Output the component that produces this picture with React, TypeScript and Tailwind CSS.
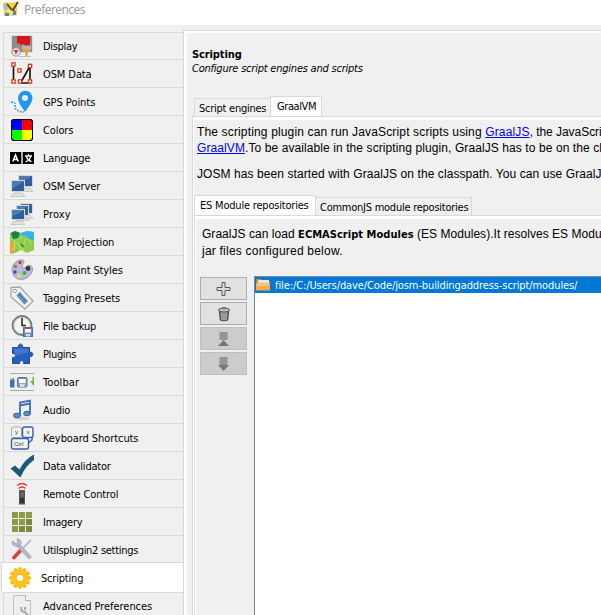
import React from 'react';

function Icon({ name }: { name: string }) {
  const p = { width: 24, height: 24, viewBox: '0 0 24 24', fill: 'none' } as const;
  switch (name) {
    case 'display':
      return (
        <svg {...p}>
          <rect x="1.5" y="1.5" width="21" height="17" fill="#8c8c8c" stroke="#ddd" />
          <path d="M7 2h13v10l-1.500 1-1-2-1.500 3-2-4-3 1-2-2-2 1z" fill="#d8141c" />
          <path d="M12 11.500h9v3.500h-9z" fill="#b9b4ae" />
          <path d="M12.500 15h8v2.500h-2.500l-.5 5h-2l-.5-5h-2.500z" fill="#e2a14a" />
          <circle cx="6" cy="18" r="4.200" fill="#e5e5e5" stroke="#999" />
          <path d="M3.500 16h5L6 20.500z" fill="#d8343c" />
          <path d="M9 22.500h12" stroke="#bbb" />
        </svg>
      );
    case 'osm':
      return (
        <svg {...p}>
          <path d="M3.500 3v18M10.500 21L20 4v17h-9.500" stroke="#111" strokeWidth="1.600" />
          {[[3.5, 2.5], [20, 4], [9.5, 8.5], [3.5, 19.5], [10, 19.5], [20, 19.5]].map(([x, y]) => (
            <g key={x + '-' + y}>
              <rect x={x - 2.300} y={y - 2.300} width="4.600" height="4.600" fill="#e23c1c" />
              <rect x={x - 1} y={y - 1} width="2" height="2" fill="#fff" />
            </g>
          ))}
        </svg>
      );
    case 'gps':
      return (
        <svg {...p}>
          <path d="M15 22C11 16 8 12 8 8a7 7 0 0 1 14.500 0c0 4-4 9-7.500 14z" fill="#2196f3" />
          <circle cx="15" cy="8" r="3" fill="#eee" />
          <path d="M1 12c3 0 5 1 4 4s4 6 9 6" stroke="#2d9be5" strokeWidth="1.600" strokeDasharray="1.800 1.200" />
        </svg>
      );
    case 'colors':
      return (
        <svg {...p}>
          <rect x="1" y="1" width="22" height="22" rx="3" fill="#000" />
          <path d="M2 2h10v10H2z" fill="#00f" />
          <path d="M12 2h10v10H12z" fill="#f00" />
          <path d="M2 12h10v10H2z" fill="#0f0" />
          <path d="M12 12h10v10H12z" fill="#ff0" />
          <rect x="1.500" y="1.500" width="21" height="21" rx="3" stroke="#000" />
        </svg>
      );
    case 'language':
      return (
        <svg {...p}>
          <path d="M0 6h11v12H0zM13 6h11v12H13z" fill="#000" />
          <path d="M11 6h2v12h-2z" fill="#aaa" />
          <path d="M2.800 15.500L5.500 9l2.700 6.500M3.800 13.500h3.500" stroke="#fff" strokeWidth="1.500" />
          <path d="M15 10h7M18.500 8v2M20.500 10.500c-.5 3-2 4.500-5 5.200M16.500 11c.8 2.300 2.500 4 5 4.700" stroke="#fff" strokeWidth="1.300" />
        </svg>
      );
    case 'server':
    case 'proxy':
      return (
        <svg {...p}>
          {(name === 'server' ? [[8, 1, 15, 11], [1, 6, 14, 11]] : [[10, 1, 13, 10], [6, 3, 13, 10], [1, 7, 14, 10]]).map(([x, y, w, h]) => (
            <g key={x}>
              <path d={`M${x + 3} ${y + h + 2}h${w - 6}l3 3.500H${x}z`} fill="#e2e2dd" stroke="#b5b5b0" strokeWidth=".6" />
              <rect x={x} y={y} width={w} height={h + 1} fill="#d6d6d2" />
              <rect x={x + 1} y={y + 1} width={w - 2} height={h - 1} fill="#2f5f9f" />
              <path d={`M${x + 1} ${y + 1}h${w - 2}L${x + 1} ${y + h - 2}z`} fill="#4d7cb5" />
            </g>
          ))}
        </svg>
      );
    case 'map':
      return (
        <svg {...p}>
          <path d="M0 3l5-2 6 2 6-2 7 1v18l-7 3-6-3-6 3-5 1z" fill="#8ccb50" />
          <path d="M11 3l6-2 7 1v9l-6-3-4 1z" fill="#31b5ea" />
          <path d="M1 3l4-2 5 2-2 5-5 1z" fill="#14814d" />
          <path d="M0 14l3-3 2 5-2 7H0z" fill="#f7a032" />
          <path d="M1 9l7 4 3 7M8 10l7-4 7 8M13 21l2-13M5 12l-1 9" stroke="#c7e65b" strokeWidth="1" />
          <path d="M11 14l3 3" stroke="#3d7a27" strokeWidth="1.500" />
        </svg>
      );
    case 'paint':
      return (
        <svg {...p}>
          <path d="M13 2C5 1 0 9 3 16c2 6 10 7 15 3 3-2 4.500-5 4.500-8 0-4-4.500-5-6.500-2-3 2-5 0-3-3 1-2 2-3 0-4z" fill="#b9bbdc" stroke="#8789a8" strokeWidth=".8" />
          <circle cx="10" cy="4.500" r="1.600" fill="#d62b20" />
          <circle cx="5.500" cy="8.500" r="1.700" fill="#d66b10" />
          <circle cx="5" cy="14" r="1.700" fill="#2450c8" />
          <circle cx="9" cy="18" r="1.800" fill="#f0e93c" />
          <circle cx="14.500" cy="15" r="1.900" fill="#51ad23" />
          <circle cx="18" cy="10.500" r="2.400" fill="#333" />
        </svg>
      );
    case 'tag':
      return (
        <svg {...p}>
          <path d="M1 1.500l9-.5 13 14-8 8L1 11z" fill="#f0f0ee" stroke="#a8aaa5" strokeWidth="1.300" />
          <circle cx="4.800" cy="5" r="1.700" fill="#fff" stroke="#999" />
          <path d="M10 6l8 9-3.500 3.500-8-9z" fill="#4c7cb3" />
          <path d="M8.500 9.500l7 7.500M11 8l6.500 7" stroke="#a9c4e0" strokeWidth=".8" />
        </svg>
      );
    case 'backup':
      return (
        <svg {...p}>
          <circle cx="12" cy="11.500" r="9.500" fill="#f5f5f2" stroke="#777" strokeWidth="1.800" />
          <circle cx="12" cy="11.500" r="8" stroke="#c8c8c4" />
          <path d="M12 4v7.500h4" stroke="#222" strokeWidth="1.500" />
          <rect x="13.500" y="13.500" width="9" height="9" fill="#6d8fc4" stroke="#4a6fab" />
          <path d="M15 14h6v4.500h-6z" fill="#fff" />
          <path d="M14.500 14.500h7" stroke="#e33" />
          <path d="M16 20h4v2.500h-4z" fill="#ddd" />
        </svg>
      );
    case 'plugin':
      return (
        <svg {...p}>
          <path d="M2.500 5.500h6C7 1 14 1 12.500 5.500h7v5c4.500-1.500 4.500 5 0 4v7h-6c1-4-4.500-4-4 0h-7v-6c4 .5 4-4.500 0-4z" fill="#2560bf" stroke="#1b4b9b" />
          <path d="M3.500 6.500h15v4l-13 3z" fill="#4e87d4" opacity=".65" />
        </svg>
      );
    case 'toolbar':
      return (
        <svg {...p}>
          <path d="M0 3.500h24M0 20.500h24" stroke="#aaa" />
          <path d="M0 8h3.500l1 1.500v8H0z" fill="#4475aa" />
          <path d="M0 8h3v2H0z" fill="#a6bccc" />
          <rect x="7.500" y="7.500" width="9.500" height="9.500" rx="1" fill="#8fa6ca" stroke="#5472a3" />
          <path d="M9 8h6.500v5H9z" fill="#fff" />
          <path d="M9 8.500h6.500" stroke="#d66" />
          <path d="M10 14h4.500v3H10z" fill="#ddd" />
          <path d="M24 7h-1.500v4H20l4 5.500z" fill="#73b72a" />
        </svg>
      );
    case 'audio':
      return (
        <svg {...p}>
          <ellipse cx="12" cy="20.500" rx="8" ry="1.800" fill="#d5d5d5" />
          <path d="M10 18V4.500l10-2V16M10 7.500l10-2" stroke="#3f6fb5" strokeWidth="1.800" />
          <ellipse cx="7" cy="17.500" rx="3.600" ry="2.300" fill="#5a8fd6" stroke="#35609f" />
          <ellipse cx="17" cy="15.500" rx="3.300" ry="2.300" fill="#5a8fd6" stroke="#35609f" />
        </svg>
      );
    case 'keyboard':
      return (
        <svg {...p}>
          <path d="M22 11v3l-5 4" stroke="#3465a4" strokeWidth="1.500" />
          <rect x="1.500" y="1" width="10" height="10.500" rx="2" fill="#f2f2f0" stroke="#aaa" />
          <rect x="12.500" y="1" width="10.500" height="10.500" rx="2" fill="#f2f2f0" stroke="#3465a4" strokeWidth="1.400" />
          <rect x="1.500" y="12.500" width="17" height="10.500" rx="2" fill="#f2f2f0" stroke="#3465a4" strokeWidth="1.400" />
          <text x="5" y="7.500" fontSize="6" fontFamily="Liberation Sans, sans-serif" fill="#333">y</text>
          <text x="16.500" y="7.500" fontSize="6" fontFamily="Liberation Sans, sans-serif" fill="#333">x</text>
          <text x="4" y="19.500" fontSize="6" fontFamily="Liberation Sans, sans-serif" fill="#333">Ctrl</text>
        </svg>
      );
    case 'check':
      return (
        <svg {...p}>
          <path d="M.5 14.500L5 11.500l4.500 4Q15 5 24 .5V6Q15 12 10.500 23.500z" fill="#1d5a75" />
        </svg>
      );
    case 'remote':
      return (
        <svg {...p}>
          <path d="M7 3.500q5-4 10 0M8.500 6.500q3.500-3 7 0" stroke="#d63a3a" strokeWidth="1.300" />
          <rect x="9" y="8" width="6" height="14.500" fill="#555" />
          <path d="M10.500 8h3v1.500h-3z" fill="#c33" />
          <path d="M10 12h4M10 14h4" stroke="#777" />
          <path d="M10 16h4v5h-4z" fill="#333" />
        </svg>
      );
    case 'imagery':
      return (
        <svg {...p}>
          {[2, 9, 16].flatMap((x) => [2, 9, 16].map((y) => <rect key={x + '-' + y} x={x} y={y} width="6" height="6" fill={x + y > 18 ? '#7b8939' : '#8b9b45'} />))}
        </svg>
      );
    case 'utils':
      return (
        <svg {...p}>
          <path d="M21 3l-9 9" stroke="#aab0bd" strokeWidth="1.600" />
          <path d="M11.500 12.500l-7.500 8" stroke="#d94040" strokeWidth="3.800" strokeLinecap="round" />
          <path d="M8 8l11.500 12" stroke="#b3b5c5" strokeWidth="4" strokeLinecap="round" />
          <path d="M3 4l3 3 2-1-1-4c4 0 5 4 3 6s-7 2-8-2z" fill="#babccb" stroke="#999bab" strokeWidth=".8" />
        </svg>
      );
    case 'gear':
      return (
        <svg {...p}>
          {[0, 30, 60, 90, 120, 150].map((a) => (
            <rect key={a} x="10.200" y="1.200" width="3.600" height="21.600" rx=".6" fill="#f9b91a" transform={`rotate(${a} 12 12)`} />
          ))}
          <circle cx="12" cy="12" r="9" fill="#fdc21f" />
          <circle cx="12" cy="12" r="4" fill="#f3ab12" />
          <circle cx="12" cy="12" r="3.300" fill="#fff" />
        </svg>
      );
    default:
      return (
        <svg {...p}>
          <path d="M3.500 .5h12l5 5v18h-17z" fill="#eee" stroke="#c2c2c2" />
          <path d="M15.500 .5v5h5" fill="#fff" stroke="#b0b0b0" />
          <path d="M11 12c0 5 2 5 4 5l5 6M15 12v3" stroke="#aaa" strokeWidth="2.200" />
        </svg>
      );
  }
}

const rows = [
  ['display', 'Display', 'tracking-[-0.32px]'],
  ['osm', 'OSM Data', 'tracking-[-0.1px]'],
  ['gps', 'GPS Points', 'tracking-[-0.05px]'],
  ['colors', 'Colors', 'tracking-[-0.1px]'],
  ['language', 'Language', 'tracking-[-0.2px]'],
  ['server', 'OSM Server', 'tracking-[-0.1px]'],
  ['proxy', 'Proxy', 'tracking-[0.15px]'],
  ['map', 'Map Projection', 'tracking-[-0.12px]'],
  ['paint', 'Map Paint Styles', 'tracking-[-0.12px]'],
  ['tag', 'Tagging Presets', 'tracking-[0px]'],
  ['backup', 'File backup', 'tracking-[-0.2px]'],
  ['plugin', 'Plugins', 'tracking-[-0.35px]'],
  ['toolbar', 'Toolbar', 'tracking-[0.1px]'],
  ['audio', 'Audio', 'tracking-[-0.2px]'],
  ['keyboard', 'Keyboard Shortcuts', 'tracking-[-0.08px]'],
  ['check', 'Data validator', 'tracking-[-0.2px]'],
  ['remote', 'Remote Control', 'tracking-[-0.12px]'],
  ['imagery', 'Imagery', 'tracking-[-0.2px]'],
  ['utils', 'Utilsplugin2 settings', 'pt-[3px] tracking-[-0.3px]'],
];

function Sidebar() {
  return (
    <nav className="w-[184px] shrink-0 pt-[7px]">
      {rows.map(([icon, label, tracking]) => (
        <div key={label} className="ml-[3px] flex h-7 items-center gap-[9px] border-t border-r border-l border-[#d9d9d9] pl-1.5 first:h-[27px] nth-19:h-[27px]">
          <div className="h-6 w-6 shrink-0"><Icon name={icon} /></div>
          <span className={`pt-0.5 ${tracking}`}>{label}</span>
        </div>
      ))}
      <div className="ml-px flex h-[30px] items-center gap-[9px] border-t border-l border-[#d9d9d9] bg-white pl-1.5">
        <Icon name="gear" />
        <span className="pt-0.5 tracking-[-0.2px]">Scripting</span>
      </div>
      <div className="ml-[3px] flex h-7 items-center gap-[9px] border-t border-r border-l border-[#d9d9d9] pl-1.5">
        <Icon name="advanced" />
        <span className="tracking-[-0.05px]">Advanced Preferences</span>
      </div>
    </nav>
  );
}

function ToolButtons() {
  const enabled = 'flex h-[23px] w-[47px] items-center justify-center border border-[#adadad] bg-[#e1e1e1]';
  const disabled = 'flex h-[23px] w-[47px] items-center justify-center border border-[#bfbfbf] bg-[#cccccc]';
  return (
    <div className="flex flex-col gap-0.5 pt-px">
      <div className={enabled}>
        <svg width="16" height="16" viewBox="0 0 16 16"><path d="M6 1.500h3v5h5v3H9v5H6v-5H1v-3h5z" fill="#ddd" stroke="#555753" /></svg>
      </div>
      <div className={enabled}>
        <svg width="16" height="16" viewBox="0 0 16 16" fill="none">
          <path d="M3.500 5h9l-.7 9q-3.800 1.800-7.600 0z" fill="#777" stroke="#444" />
          <path d="M6 6v8M8 6v8.500M10 6v8" stroke="#c2c2bd" />
          <ellipse cx="8" cy="4" rx="5.500" ry="2" fill="#bbb" stroke="#555" />
          <path d="M6.500 2q1.500-1.500 3 0" stroke="#555" />
        </svg>
      </div>
      <div className={disabled}>
        <svg width="16" height="16" viewBox="0 0 16 16"><path d="M3.500 1h8v8h-8z" fill="#929292" /><path d="M3.500 3h8M3.500 6h8" stroke="#9c9c9c" /><path d="M2 15l5.500-6 5.500 6z" fill="#777" /></svg>
      </div>
      <div className={disabled}>
        <svg width="16" height="16" viewBox="0 0 16 16"><path d="M3.500 1h8v8h-8z" fill="#929292" /><path d="M3.500 3h8M3.500 6h8" stroke="#9c9c9c" /><path d="M2 9h11l-5.500 6z" fill="#777" /></svg>
      </div>
    </div>
  );
}

export default function App() {
  return (
    <div className="flex h-[615px] w-[601px] flex-col overflow-hidden bg-[#f0f0f0] font-['DejaVu_Sans_Condensed','DejaVu_Sans',sans-serif] text-[11px] leading-[14px] whitespace-nowrap text-black">
      <header className="flex h-[25px] shrink-0 items-start bg-white pt-px pl-[3px]">
        <svg width="16" height="16" viewBox="0 0 16 16">
          <path d="M0 2l4-1 4 1 6-1v13l-5 1-4-1-4 1z" fill="#f4d13d" />
          <path d="M0 4l3-1 2 4-3 2z" fill="#8fc4e8" /><path d="M3 10l4-3 5 2-3 5z" fill="#efe28c" />
          <path d="M2 12h4v3H2zM10 9l3 1v4h-3z" fill="#4d86c5" />
          <path d="M4 3l4 5 2 1 5-8" stroke="#6e3a13" strokeWidth="1.800" fill="none" />
        </svg>
        <span className="ml-[5px] pt-px font-['Open_Sans','Noto_Sans',sans-serif] text-[12px] leading-4 tracking-[-0.55px] text-[#999]">Preferences</span>
      </header>
      <div className="flex min-h-0 flex-1">
        <Sidebar />
        <main className="mt-[5px] -ml-px w-[418px] border-t border-l border-[#d9d9d9]">
          <div className="h-full border-t-2 border-l-[3px] border-white pl-[5px]">
            <h1 className="pt-[15px] leading-[14px] font-bold tracking-[-0.1px]">Scripting</h1>
            <p className="tracking-[-0.22px] italic">Configure script engines and scripts</p>
            <div className="mt-5 flex h-5 items-end pl-0.5">
              <div className="h-[18px] w-[76px] border-t border-l border-[#d9d9d9] pt-[3px] pl-1 tracking-[-0.25px]">Script engines</div>
              <div className="h-5 w-[52px] border-t border-r border-l border-[#d9d9d9] bg-white pt-[3px] pl-1.5 tracking-[-0.4px]">GraalVM</div>
            </div>
            <section className="h-[500px] border-t border-l border-[#d9d9d9]">
              <div className="h-full border-t-[3px] border-l border-white">
                <div className="pl-[3px] font-['Liberation_Sans',Arial,sans-serif] text-[12px] leading-4 tracking-[0.15px]">
                  <p className="pt-1">The scripting plugin can run JavaScript scripts using <span className="text-[#00f] underline">GraalJS</span><span className="tracking-[-0.05px]">, the JavaScri</span></p>
                  <p className="tracking-[0.09px]"><span className="text-[#00f] underline">GraalVM</span>.To be available in the scripting plugin, GraalJS has to be on the cl</p>
                  <p className="pt-2.5 tracking-[0.08px]">JOSM has been started with GraalJS on the classpath. You can use GraalJ</p>
                </div>
                <div className="mt-[13px] flex h-5 items-end">
                  <div className="h-5 w-[122px] border-t border-r border-l border-[#d9d9d9] bg-white pt-[3px] pl-[5px] tracking-[-0.2px]">ES Module repositories</div>
                  <div className="h-[18px] w-[156px] border-t border-r border-[#d9d9d9] pt-[3px] pl-1 tracking-[-0.25px]">CommonJS module repositories</div>
                </div>
                <div className="border-t border-l border-[#d9d9d9]">
                  <div className="h-[400px] border-t-[3px] border-l border-white">
                    <div className="pt-[7px] pl-1.5 font-['Liberation_Sans',Arial,sans-serif] text-[12px] leading-4">
                      <p className="tracking-[0.04px]">GraalJS can load <b className="font-['DejaVu_Sans_Condensed','DejaVu_Sans',sans-serif] text-[11px]">ECMAScript Modules</b> (ES Modules).It resolves ES Modu</p>
                      <p className="tracking-[0.22px]">jar files configured below.</p>
                    </div>
                    <div className="mt-[17px] flex gap-[7px] pl-1">
                      <ToolButtons />
                      <div className="h-[350px] flex-1 border-t border-l border-[#7a8a99] bg-white">
                        <div className="flex h-4 items-center bg-[#0078d7] text-white">
                          <svg width="16" height="16" viewBox="0 0 16 16"><path d="M1 2h5l1 2h8v9H1z" fill="#d9822b" /><path d="M3 3h11v5H3z" fill="#e8e4dc" /><path d="M1 6h14v7.500H1z" fill="#f7aa4b" /><path d="M2 6.500h12v2.500H2z" fill="#ffc77c" /></svg>
                          <span className="ml-1 pt-px tracking-[-0.1px]">file:/C:/Users/dave/Code/josm-buildingaddress-script/modules/</span>
                        </div>
                      </div>
                    </div>
                  </div>
                </div>
              </div>
            </section>
          </div>
        </main>
      </div>
    </div>
  );
}
